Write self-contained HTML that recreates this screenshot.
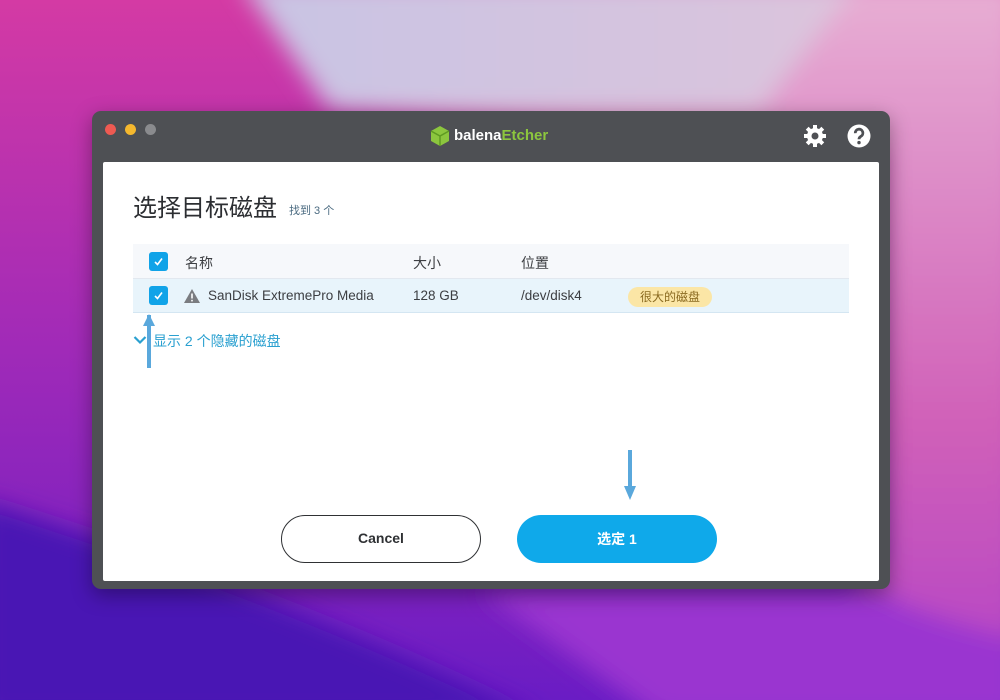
<!DOCTYPE html>
<html><head><meta charset="utf-8"><style>
*{margin:0;padding:0;box-sizing:border-box}
body{width:1000px;height:700px;overflow:hidden;position:relative;font-family:"Liberation Sans","Noto Sans CJK SC",sans-serif;
background:linear-gradient(180deg,#c22fa8 0%,#a028b8 40%,#6a1fc8 70%,#4a18b8 100%);}
.bg{position:absolute;inset:0}
.win{position:absolute;left:92px;top:111px;width:798px;height:478px;background:#4e5054;border-radius:9px;box-shadow:0 6px 20px rgba(0,0,0,.35)}
.dot{position:absolute;top:13px;width:11px;height:11px;border-radius:50%}
.content{position:absolute;left:11px;top:51px;width:776px;height:419px;background:#fff;border-radius:2px}
.abs{position:absolute}
.cb{position:absolute;width:19px;height:19px;background:#10a3e8;border-radius:3px}
.cb svg{position:absolute;left:3px;top:3px}
.txt{font-size:14px;color:#3c3e42;white-space:nowrap}
</style></head><body>
<svg class="bg" width="1000" height="700">
<defs>
<linearGradient id="t" x1="0" y1="0" x2="1" y2="0"><stop offset="0" stop-color="#c8c4e4"/><stop offset="1" stop-color="#dcc4dc"/></linearGradient>
<linearGradient id="r" x1="0" y1="0" x2="0" y2="1"><stop offset="0" stop-color="#e8b0d4"/><stop offset=".6" stop-color="#d060b8"/><stop offset="1" stop-color="#b040c8"/></linearGradient>
<linearGradient id="l" x1="0" y1="0" x2="0" y2="1"><stop offset="0" stop-color="#d43aa4"/><stop offset=".5" stop-color="#a02ab8"/><stop offset="1" stop-color="#6a1cc4"/></linearGradient>
<filter id="b"><feGaussianBlur stdDeviation="12"/></filter>
</defs>
<rect width="1000" height="700" fill="url(#l)"/>
<g filter="url(#b)">
<path d="M240 -20 L1020 -20 L1020 720 L720 720 L880 560 L880 150 L330 110 Z" fill="url(#r)"/>
<path d="M240 -20 L860 -20 L760 110 L330 110 Z" fill="url(#t)"/>
<path d="M-20 500 Q300 600 540 720 L-20 720 Z" fill="#4a14b4"/>
<path d="M480 589 L660 720 L1020 720 L1020 640 Q900 610 880 589 Z" fill="#9a34d0"/>
</g>
</svg>
<div class="win">
<div class="dot" style="left:13px;background:#ee5a52"></div>
<div class="dot" style="left:33px;background:#f5b82e"></div>
<div class="dot" style="left:53px;background:#8a8b8e"></div>
<svg class="abs" style="left:338px;top:14px" width="20" height="22" viewBox="0 0 20 22"><path d="M10 1 L19 6 L19 16 L10 21 L1 16 L1 6Z" fill="#8cc63e"/><path d="M1 6 L10 11 L19 6 M10 11 L10 21" stroke="#5e9a22" stroke-width="1.5" fill="none"/></svg>
<div class="abs" style="left:362px;top:16px;font-size:15px;font-weight:bold;color:#fff">balena<span style="color:#8cc63e">Etcher</span></div>
<svg class="abs" style="left:711px;top:13px" width="24" height="24" viewBox="0 0 24 24"><g fill="#fff"><circle cx="12" cy="12" r="8"/><g stroke="#fff" stroke-width="4"><path d="M12 1v22M1 12h22M4.2 4.2l15.6 15.6M19.8 4.2L4.2 19.8"/></g></g><circle cx="12" cy="12" r="3.5" fill="#4e5054"/></svg>
<svg class="abs" style="left:755px;top:13px" width="24" height="24" viewBox="0 0 24 24"><circle cx="12" cy="12" r="11.5" fill="#fff"/><path d="M8.3 9.2a3.8 3.8 0 1 1 5.5 3.2c-1.2.7-1.8 1.3-1.8 2.8" stroke="#4e5054" stroke-width="2.8" fill="none"/><circle cx="12" cy="18.6" r="1.7" fill="#4e5054"/></svg>
<div class="content">
<div class="abs" style="left:30px;top:26px;font-size:24px;color:#2c2e32">选择目标磁盘</div>
<div class="abs" style="left:186px;top:40px;font-size:11px;color:#4a6a80">找到 3 个</div>
<div class="abs" style="left:30px;top:82px;width:716px;height:35px;background:#f6f8fb;border-bottom:1px solid #e2e8ef"></div>
<div class="abs" style="left:30px;top:117px;width:716px;height:34px;background:#e8f4fb;border-bottom:1px solid #d4e6f2"></div>
<div class="cb" style="left:46px;top:90px"><svg width="13" height="13" viewBox="0 0 13 13"><path d="M3 7 L5.5 9.5 L10 3.5" stroke="#fff" stroke-width="1.6" fill="none"/></svg></div>
<div class="cb" style="left:46px;top:124px"><svg width="13" height="13" viewBox="0 0 13 13"><path d="M3 7 L5.5 9.5 L10 3.5" stroke="#fff" stroke-width="1.6" fill="none"/></svg></div>
<div class="abs txt" style="left:82px;top:91px">名称</div>
<div class="abs txt" style="left:310px;top:91px">大小</div>
<div class="abs txt" style="left:418px;top:91px">位置</div>
<svg class="abs" style="left:80px;top:126px" width="18" height="16" viewBox="0 0 18 16"><path d="M9 1 L17 15 L1 15Z" fill="#7a7c80"/><rect x="8.2" y="5.5" width="1.6" height="5" fill="#fff"/><rect x="8.2" y="11.8" width="1.6" height="1.6" fill="#fff"/></svg>
<div class="abs txt" style="left:105px;top:126px;font-size:13.5px">SanDisk ExtremePro Media</div>
<div class="abs txt" style="left:310px;top:126px;font-size:13.5px">128 GB</div>
<div class="abs txt" style="left:418px;top:126px;font-size:13.5px">/dev/disk4</div>
<div class="abs" style="left:525px;top:125px;width:84px;height:20px;background:#fbe6a6;border-radius:10px;font-size:12px;color:#8a6a20;text-align:center;line-height:20px">很大的磁盘</div>
<svg class="abs" style="left:30px;top:173px" width="14" height="10" viewBox="0 0 14 10"><path d="M1.5 2 L7 7.5 L12.5 2" stroke="#2aa0d0" stroke-width="2.2" fill="none"/></svg>
<div class="abs" style="left:50px;top:169px;font-size:14px;color:#2aa0d0">显示 2 个隐藏的磁盘</div>
<svg class="abs" style="left:38px;top:150px" width="16" height="58" viewBox="0 0 16 58"><path d="M8 3 L8 56" stroke="#5aa8dc" stroke-width="4"/><path d="M2 14 L8 2 L14 14Z" fill="#5aa8dc"/></svg>
<svg class="abs" style="left:519px;top:288px" width="16" height="52" viewBox="0 0 16 52"><path d="M8 0 L8 40" stroke="#5aa8dc" stroke-width="4"/><path d="M2 36 L8 50 L14 36Z" fill="#5aa8dc"/></svg>
<div class="abs" style="left:178px;top:353px;width:200px;height:48px;border:1.5px solid #2f3134;border-radius:24px;text-align:center;line-height:45px;font-size:14px;font-weight:bold;color:#2f3134">Cancel</div>
<div class="abs" style="left:414px;top:353px;width:200px;height:48px;background:#0fa9ea;border-radius:24px;text-align:center;line-height:48px;font-size:14px;font-weight:bold;color:#fff">选定 1</div>
</div>
</div>
</body></html>
